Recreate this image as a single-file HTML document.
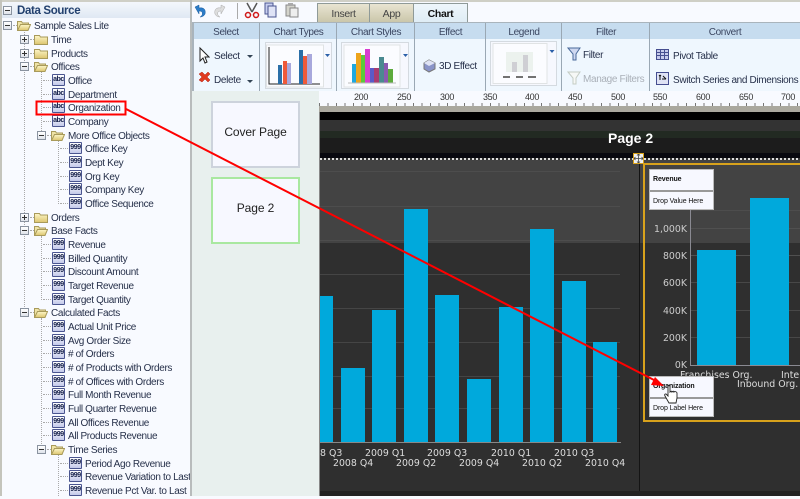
<!DOCTYPE html>
<html><head><meta charset="utf-8"><style>
html,body{margin:0;padding:0}
body{width:800px;height:496px;overflow:hidden;position:relative;background:#f8faff;font:10px "Liberation Sans",sans-serif;color:#26304a;letter-spacing:-.35px}
.a,.a *{box-sizing:border-box}
.a{position:absolute}
.r{position:absolute;height:16px;line-height:14px;white-space:nowrap;left:0;width:190px;overflow:hidden}
.r span{position:absolute;top:2px}
.r i{position:absolute}
.x{width:9px;height:9px;top:3px;border:1px solid #8a93a0;background:linear-gradient(#fff,#dfe3ea);box-sizing:border-box}
.x:before{content:"";position:absolute;left:1px;top:3px;width:5px;height:1px;background:#333}
.p:after{content:"";position:absolute;left:3px;top:1px;width:1px;height:5px;background:#333}
.d{height:0;top:7px;border-top:1px dotted #aaa;width:8px}
.f{position:absolute;top:1px;width:14px;height:12px}
.ic{position:absolute;top:1px;width:13px;height:12px;box-sizing:border-box;border:1px solid #4a5590;background:linear-gradient(#fff,#c3c9ea);font:bold 7px/10px "Liberation Sans",sans-serif;color:#15204a;text-align:center;letter-spacing:-.4px;border-radius:1px}
.l1 .x{left:20px}.l1 .f{left:34px}.l1 span{left:51px}.l1 .d{left:30px;width:4px}
.l2 .d{left:43px}.l2 .ic{left:52px}.l2 span{left:68px}
.l2f .x{left:37px}.l2f .f{left:51px}.l2f span{left:68px}.l2f .d{left:47px;width:4px}
.l3 .d{left:60px}.l3 .ic{left:69px}.l3 span{left:85px}
.v{position:absolute;width:0;border-left:1px dotted #aaa}
.h{position:absolute;top:23px;height:16px;background:#c6dcef;text-align:center;line-height:20px;font-size:10px;color:#3a4560}
.sep{position:absolute;top:23px;height:68px;width:1px;background:#9aa8b4}
.t{position:absolute;white-space:nowrap}
.tab{position:absolute;top:3px;height:19px;text-align:center;line-height:20px;font-size:10.5px;border:1px solid #8f9a98;border-bottom:0;background:linear-gradient(#e8e4d2,#c9c5a8);color:#444}
.rl{position:absolute;top:92px;font-size:9px;line-height:11px;transform:translateX(-50%);color:#333}
.b{position:absolute;background:#00a9dc}
.cl{position:absolute;font:9.4px/12px "DejaVu Sans",sans-serif;color:#ddd;white-space:nowrap;letter-spacing:0}
.drop{position:absolute;left:649px;width:65px;height:41px;box-sizing:border-box;background:#f7f8ff;border:1px solid #bbb;color:#111;font-size:7px;letter-spacing:-.1px}
.drop div{height:20px;line-height:19px;padding-left:3px;box-sizing:border-box}
.drop div+div{border-top:2px solid #999}
.y{position:absolute;left:640px;width:47px;text-align:right;font:9.4px/12px "DejaVu Sans",sans-serif;color:#ccc;letter-spacing:0}
</style></head><body>
<svg width="0" height="0" style="position:absolute"><defs>
<linearGradient id="g" x1="0" y1="0" x2="0" y2="1"><stop offset="0" stop-color="#fdf6c8"/><stop offset="1" stop-color="#dcc56e"/></linearGradient>
<g id="fc"><path d="M.5 2.5h5l1 1.5h7v7.5H.5z" fill="url(#g)" stroke="#a89a5a"/></g>
<g id="fo"><path d="M.5 2.5h4l1 1.5h6v2H4l-3.500 5.500z" fill="#efe3a6" stroke="#a89a5a"/><path d="M3.500 5.500h10l-2.500 6H.5z" fill="url(#g)" stroke="#a89a5a"/></g>
</defs></svg>

<!-- left panel -->
<div class="a" style="left:0;top:0;width:800px;height:2px;background:#cfcfc6"></div>
<div class="a" style="left:0;top:0;width:2px;height:496px;background:#c4c4bc"></div>
<div class="a" style="left:2px;top:2px;width:188px;height:16px;background:linear-gradient(#f4f7fc,#dfe8f3)"></div>
<div class="a x" style="left:3px;top:6px"></div>
<div class="t" style="left:17px;top:3px;font:bold 11.500px/16px 'Liberation Sans',sans-serif;color:#22406e">Data Source</div>

<div class="v" style="left:24px;top:30px;height:283px"></div>
<div class="v" style="left:41px;top:72px;height:59px"></div>
<div class="v" style="left:41px;top:236px;height:64px"></div>
<div class="v" style="left:41px;top:318px;height:128px"></div>
<div class="v" style="left:58px;top:140px;height:64px"></div>
<div class="v" style="left:58px;top:454px;height:42px"></div>

<div class="r" style="top:18px"><i class="x" style="left:3px"></i><i class="d" style="left:13px;width:4px"></i><svg class="f" style="left:17px"><use href="#fo"/></svg><span style="left:34px">Sample Sales Lite</span></div>
<div class="r l1" style="top:32px"><i class="x p"></i><i class="d"></i><svg class="f"><use href="#fc"/></svg><span>Time</span></div>
<div class="r l1" style="top:46px"><i class="x p"></i><i class="d"></i><svg class="f"><use href="#fc"/></svg><span>Products</span></div>
<div class="r l1" style="top:59px"><i class="x"></i><i class="d"></i><svg class="f"><use href="#fo"/></svg><span>Offices</span></div>
<div class="r l2" style="top:73px"><i class="d"></i><b class="ic">abc</b><span>Office</span></div>
<div class="r l2" style="top:87px"><i class="d"></i><b class="ic">abc</b><span>Department</span></div>
<div class="r l2" style="top:100px"><i class="d"></i><b class="ic">abc</b><span>Organization</span></div>
<div class="r l2" style="top:114px"><i class="d"></i><b class="ic">abc</b><span>Company</span></div>
<div class="r l2f" style="top:128px"><i class="x"></i><i class="d"></i><svg class="f"><use href="#fo"/></svg><span>More Office Objects</span></div>
<div class="r l3" style="top:141px"><i class="d"></i><b class="ic">999</b><span>Office Key</span></div>
<div class="r l3" style="top:155px"><i class="d"></i><b class="ic">999</b><span>Dept Key</span></div>
<div class="r l3" style="top:169px"><i class="d"></i><b class="ic">999</b><span>Org Key</span></div>
<div class="r l3" style="top:182px"><i class="d"></i><b class="ic">999</b><span>Company Key</span></div>
<div class="r l3" style="top:196px"><i class="d"></i><b class="ic">999</b><span>Office Sequence</span></div>
<div class="r l1" style="top:210px"><i class="x p"></i><i class="d"></i><svg class="f"><use href="#fc"/></svg><span>Orders</span></div>
<div class="r l1" style="top:223px"><i class="x"></i><i class="d"></i><svg class="f"><use href="#fo"/></svg><span>Base Facts</span></div>
<div class="r l2" style="top:237px"><i class="d"></i><b class="ic">999</b><span>Revenue</span></div>
<div class="r l2" style="top:251px"><i class="d"></i><b class="ic">999</b><span>Billed Quantity</span></div>
<div class="r l2" style="top:264px"><i class="d"></i><b class="ic">999</b><span>Discount Amount</span></div>
<div class="r l2" style="top:278px"><i class="d"></i><b class="ic">999</b><span>Target Revenue</span></div>
<div class="r l2" style="top:292px"><i class="d"></i><b class="ic">999</b><span>Target Quantity</span></div>
<div class="r l1" style="top:305px"><i class="x"></i><i class="d"></i><svg class="f"><use href="#fo"/></svg><span>Calculated Facts</span></div>
<div class="r l2" style="top:319px"><i class="d"></i><b class="ic">999</b><span>Actual Unit Price</span></div>
<div class="r l2" style="top:333px"><i class="d"></i><b class="ic">999</b><span>Avg Order Size</span></div>
<div class="r l2" style="top:346px"><i class="d"></i><b class="ic">999</b><span># of Orders</span></div>
<div class="r l2" style="top:360px"><i class="d"></i><b class="ic">999</b><span># of Products with Orders</span></div>
<div class="r l2" style="top:374px"><i class="d"></i><b class="ic">999</b><span># of Offices with Orders</span></div>
<div class="r l2" style="top:387px"><i class="d"></i><b class="ic">999</b><span>Full Month Revenue</span></div>
<div class="r l2" style="top:401px"><i class="d"></i><b class="ic">999</b><span>Full Quarter Revenue</span></div>
<div class="r l2" style="top:415px"><i class="d"></i><b class="ic">999</b><span>All Offices Revenue</span></div>
<div class="r l2" style="top:428px"><i class="d"></i><b class="ic">999</b><span>All Products Revenue</span></div>
<div class="r l2f" style="top:442px"><i class="x"></i><i class="d"></i><svg class="f"><use href="#fo"/></svg><span>Time Series</span></div>
<div class="r l3" style="top:456px"><i class="d"></i><b class="ic">999</b><span>Period Ago Revenue</span></div>
<div class="r l3" style="top:469px"><i class="d"></i><b class="ic">999</b><span>Revenue Variation to Last</span></div>
<div class="r l3" style="top:483px"><i class="d"></i><b class="ic">999</b><span>Revenue Pct Var. to Last</span></div>

<!-- toolbar -->
<div class="a" style="left:190px;top:0;width:2px;height:496px;background:#b8bcbc"></div>
<div class="a" style="left:192px;top:2px;width:608px;height:21px;background:#f8faff"></div>
<svg class="a" style="left:192px;top:2px" width="125" height="20">
<path d="M3 5l4-2v3c5-1 7 2 6 6-1 2-3 3-5 3 2-1 3-3 2-5-1-1-2-1-3-1v3z" fill="#2b7cc8" stroke="#1a5a9a" stroke-width=".5"/>
<path d="M33 5l-4-2v3c-5-1-7 2-6 6 1 2 3 3 5 3-2-1-3-3-2-5 1-1 2-1 3-1v3z" fill="#ddd" stroke="#aaa" stroke-width=".5"/>
<rect x="45" y="1" width="1" height="16" fill="#aaa"/>
<path d="M55 1l5 9M65 1l-5 9" stroke="#555" stroke-width="1.500"/><circle cx="56" cy="13" r="2.500" fill="none" stroke="#d01818" stroke-width="1.500"/><circle cx="64" cy="13" r="2.500" fill="none" stroke="#d01818" stroke-width="1.500"/>
<rect x="73" y="1" width="8" height="11" fill="#c8cff0" stroke="#4a5590"/><rect x="76" y="4" width="8" height="11" fill="#dfe3f6" stroke="#4a5590"/>
<rect x="94" y="3" width="9" height="11" fill="#d4d4cc" stroke="#888"/><rect x="98" y="6" width="8" height="9" fill="#eee" stroke="#888"/><rect x="96" y="1" width="5" height="3" fill="#aaa"/>
</svg>
<div class="tab" style="left:317px;width:51px">Insert</div>
<div class="tab" style="left:369px;width:43px">App</div>
<div class="tab" style="left:413px;width:53px;background:linear-gradient(#eef6fb,#dcebf4);color:#111;font-weight:bold;height:21px">Chart</div>

<!-- ribbon -->
<div class="a" style="left:192px;top:22px;width:608px;height:1px;background:#a9b4bc"></div>
<div class="a" style="left:192px;top:23px;width:608px;height:68px;background:#eff7fe"></div>
<div class="h" style="left:192px;width:68px">Select</div>
<div class="h" style="left:260px;width:77px">Chart Types</div>
<div class="h" style="left:337px;width:78px">Chart Styles</div>
<div class="h" style="left:415px;width:71px">Effect</div>
<div class="h" style="left:486px;width:76px">Legend</div>
<div class="h" style="left:562px;width:88px">Filter</div>
<div class="h" style="left:650px;width:150px">Convert</div>
<div class="sep" style="left:259px"></div><div class="sep" style="left:336px"></div><div class="sep" style="left:414px"></div><div class="sep" style="left:485px"></div><div class="sep" style="left:561px"></div><div class="sep" style="left:649px"></div>
<div class="a" style="left:192px;top:22px;width:2px;height:70px;background:#a9b4bc"></div>

<svg class="a" style="left:198px;top:46px" width="12" height="40"><path d="M2 2v13l3-3 2 5 2-1-2-5h4z" fill="#fff" stroke="#222"/><path d="M1 28l3-2 3 3 3-3 2 2-3 3 3 3-2 2-3-3-3 3-3-2 3-3z" fill="#e03a20" stroke="#b02010" stroke-width=".5"/></svg>
<div class="t" style="left:214px;top:50px;line-height:14px">Select</div><div class="t" style="left:214px;top:74px;line-height:14px">Delete</div>
<div class="t" style="left:247px;top:55px;width:0;height:0;border:3px solid transparent;border-top-color:#345"></div>
<div class="t" style="left:247px;top:80px;width:0;height:0;border:3px solid transparent;border-top-color:#345"></div>

<!-- chart types -->
<svg class="a" style="left:265px;top:42px" width="70" height="48">
<rect x=".5" y=".5" width="66" height="46" fill="#f6f8fe" stroke="#d4dae0"/><rect x="1.500" y="3" width="57" height="42" fill="#fbfcff" stroke="#e0e3e4"/>
<path d="M4 5v37h51" fill="none" stroke="#222"/>
<rect x="13" y="23" width="4" height="19" fill="#2a6fa8"/><rect x="18" y="19" width="4" height="23" fill="#ef5a3a"/><rect x="22" y="21" width="4" height="21" fill="#a8a8dc"/>
<rect x="34" y="8" width="4" height="34" fill="#2a6fa8"/><rect x="38" y="14" width="4" height="28" fill="#ef5a3a"/><rect x="42" y="12" width="5" height="30" fill="#a8a8dc"/>
<path d="M60 12h5l-2.500 3z" fill="#2a5fa8"/></svg>
<!-- chart styles -->
<svg class="a" style="left:341px;top:42px" width="70" height="48">
<rect x=".5" y=".5" width="67" height="46" fill="#f6f8fe" stroke="#d4dae0"/><rect x="3" y="3" width="56" height="42" fill="#fbfcff" stroke="#e0e3e4"/>
<rect x="11" y="22" width="4" height="19" fill="#1fa8e0"/><rect x="15" y="11" width="5" height="30" fill="#eda41c"/><rect x="20" y="13" width="4" height="28" fill="#5cc83c"/><rect x="24" y="7" width="5" height="34" fill="#d83cd0"/><rect x="29" y="26" width="4" height="15" fill="#5a5ac8"/><rect x="33" y="26" width="5" height="15" fill="#a83c70"/><rect x="38" y="15" width="5" height="26" fill="#4a8a90"/><rect x="43" y="21" width="4" height="20" fill="#8a5ab0"/><rect x="47" y="27" width="5" height="14" fill="#5caa3c"/>
<path d="M7 41h48" stroke="#bbb"/><path d="M62 12h5l-2.500 3z" fill="#2a5fa8"/></svg>
<!-- legend -->
<svg class="a" style="left:490px;top:41px" width="70" height="48">
<rect x=".5" y=".5" width="66" height="44" fill="#f6f8fe" stroke="#d4dae0"/><rect x="3" y="2.500" width="54" height="40" fill="#fbfcff" stroke="#e0e3e4"/>
<rect x="16" y="11" width="27" height="20" fill="#ecf2ee"/><rect x="22" y="21" width="5" height="10" fill="#cfcfd4"/><rect x="33" y="14" width="5" height="17" fill="#cfcfd4"/>
<path d="M13 36h7M26 36h7M38 36h8" stroke="#444" stroke-width="1.500"/><path d="M59.500 9h5l-2.500 3z" fill="#2a5fa8"/></svg>
<svg class="a" style="left:423px;top:59px" width="13" height="14"><path d="M6 1l6 3v6l-6 3-5-3V4z" fill="#8a94c8" stroke="#777"/><path d="M1 4l5 3 6-3-6-3z" fill="#dfe3f4"/></svg>
<div class="t" style="left:439px;top:60px;line-height:14px">3D Effect</div>
<!-- filter -->
<svg class="a" style="left:567px;top:46px" width="14" height="40"><path d="M1 2h12L9 8v6l-3 0V8z" fill="#cfd8f0" stroke="#4a6a9a"/><path d="M1 26h12L9 32v6H6v-6z" fill="#f6f8f6" stroke="#c4ccc4"/></svg>
<div class="t" style="left:583px;top:49px;line-height:14px">Filter</div>
<div class="t" style="left:583px;top:73px;line-height:14px;color:#aab0b8">Manage Filters</div>
<!-- convert -->
<svg class="a" style="left:656px;top:48px" width="14" height="40"><path d="M.5 1.500h12v10H.5z" fill="#c6cbec" stroke="#454e90"/><path d="M.5 4.500h12M.5 7.500h12M4.500 1.500v10M8.500 1.500v10" stroke="#454e90"/>
<rect x=".5" y="24.500" width="12" height="12" fill="#dfe3f5" stroke="#454e90"/><path d="M4 27v5M4 27l-1 1M4 27l1 1M6 31h4M10 31l-1-1M7 28l3 3" stroke="#111" fill="none"/></svg>
<div class="t" style="left:673px;top:50px;line-height:14px">Pivot Table</div>
<div class="t" style="left:673px;top:74px;line-height:14px">Switch Series and Dimensions</div>

<!-- thumbnails -->
<div class="a" style="left:192px;top:91px;width:128px;height:405px;background:#e8f0ee"></div>
<div class="a" style="left:211px;top:101px;width:89px;height:67px;background:#f7f8ff;border:2px solid #cdd3dc;text-align:center;line-height:59px;font-size:12px;letter-spacing:-.1px;color:#222">Cover Page</div>
<div class="a" style="left:211px;top:177px;width:89px;height:67px;background:#f7f8ff;border:2px solid #a9e8a0;text-align:center;line-height:59px;font-size:12px;letter-spacing:-.1px;color:#222">Page 2</div>

<!-- ruler -->
<div class="a" style="left:319px;top:91px;width:481px;height:15px;background:#f8faff"></div>
<div class="a" style="left:319px;top:103px;width:481px;height:3px;background:repeating-linear-gradient(90deg,#777 0,#777 1px,transparent 1px,transparent 8.540px)"></div>
<div class="a" style="left:319px;top:106px;width:481px;height:6px;background:#aaa89e"></div>
<div class="rl" style="left:361px">200</div><div class="rl" style="left:404px">250</div><div class="rl" style="left:447px">300</div><div class="rl" style="left:490px">350</div><div class="rl" style="left:532px">400</div><div class="rl" style="left:575px">450</div><div class="rl" style="left:618px">500</div><div class="rl" style="left:660px">550</div><div class="rl" style="left:703px">600</div><div class="rl" style="left:746px">650</div><div class="rl" style="left:788px">700</div>

<!-- canvas -->
<div class="a" style="left:319px;top:112px;width:1px;height:384px;background:#888"></div>
<div class="a" style="left:320px;top:112px;width:480px;height:8px;background:#000"></div>
<div class="a" style="left:320px;top:120px;width:480px;height:11px;background:#333"></div>
<div class="a" style="left:320px;top:131px;width:480px;height:7px;background:#222a22"></div>
<div class="a" style="left:320px;top:138px;width:480px;height:15px;background:#1c1c1c"></div>
<div class="a" style="left:320px;top:153px;width:480px;height:6px;background:#08080f"></div>
<div class="a" style="left:320px;top:159px;width:480px;height:84px;background:#434343"></div>
<div class="a" style="left:320px;top:243px;width:480px;height:248px;background:#2f2f2f"></div>
<div class="a" style="left:320px;top:491px;width:480px;height:5px;background:#222"></div>
<div class="a" style="left:320px;top:158px;width:480px;height:2px;background:repeating-linear-gradient(90deg,#ddd 0,#ddd 2px,#333 2px,#333 4px)"></div>
<div class="t" style="left:608px;top:130px;font:bold 14px/16px 'Liberation Sans',sans-serif;letter-spacing:0;color:#fff">Page 2</div>
<div class="a" style="left:639px;top:160px;width:1px;height:331px;background:#141414"></div>

<!-- left chart -->
<div class="a" style="left:320px;top:171px;width:300px;height:1px;background:#4d4d4d"></div>
<div class="a" style="left:320px;top:206px;width:300px;height:1px;background:#4d4d4d"></div>
<div class="a" style="left:320px;top:240px;width:300px;height:1px;background:#4d4d4d"></div>
<div class="a" style="left:320px;top:274px;width:300px;height:1px;background:#454545"></div>
<div class="a" style="left:320px;top:308px;width:300px;height:1px;background:#454545"></div>
<div class="a" style="left:320px;top:342px;width:300px;height:1px;background:#454545"></div>
<div class="a" style="left:320px;top:376px;width:300px;height:1px;background:#454545"></div>
<div class="a" style="left:320px;top:408px;width:300px;height:1px;background:#454545"></div>
<div class="b" style="left:320px;top:296px;width:13px;height:146px"></div>
<div class="b" style="left:341px;top:368px;width:24px;height:74px"></div>
<div class="b" style="left:372px;top:310px;width:24px;height:132px"></div>
<div class="b" style="left:404px;top:209px;width:24px;height:233px"></div>
<div class="b" style="left:435px;top:295px;width:24px;height:147px"></div>
<div class="b" style="left:467px;top:379px;width:24px;height:63px"></div>
<div class="b" style="left:499px;top:307px;width:24px;height:135px"></div>
<div class="b" style="left:530px;top:229px;width:24px;height:213px"></div>
<div class="b" style="left:562px;top:281px;width:24px;height:161px"></div>
<div class="b" style="left:593px;top:342px;width:24px;height:100px"></div>
<div class="a" style="left:320px;top:442px;width:301px;height:1px;background:#888"></div>
<div class="a" style="left:320px;top:447px;width:320px;height:30px;overflow:hidden">
<div class="cl" style="left:0;top:1px">8 Q3</div>
<div class="cl" style="left:13px;top:11px">2008 Q4</div>
<div class="cl" style="left:45px;top:1px">2009 Q1</div>
<div class="cl" style="left:76px;top:11px">2009 Q2</div>
<div class="cl" style="left:107px;top:1px">2009 Q3</div>
<div class="cl" style="left:139px;top:11px">2009 Q4</div>
<div class="cl" style="left:171px;top:1px">2010 Q1</div>
<div class="cl" style="left:202px;top:11px">2010 Q2</div>
<div class="cl" style="left:234px;top:1px">2010 Q3</div>
<div class="cl" style="left:265px;top:11px">2010 Q4</div>
</div>

<!-- right chart -->
<div class="a" style="left:643px;top:163px;width:158px;height:259px;border:2px solid #d8a21c;border-right:0"></div>
<div class="a" style="left:633px;top:153px;width:11px;height:11px;background:#eef0f2;border:1px solid #d8a21c"></div>
<svg class="a" style="left:634px;top:154px" width="9" height="9"><path d="M4.500 0v9M0 4.500h9M3 1.500l1.500-1.500 1.500 1.500M3 7.500l1.500 1.500 1.500-1.500M1.500 3L0 4.500 1.500 6M7.500 3L9 4.500 7.500 6" stroke="#444" stroke-width=".8" fill="none"/></svg>
<div class="a" style="left:690px;top:210px;width:110px;height:1px;background:#4d4d4d"></div>
<div class="a" style="left:690px;top:228px;width:110px;height:1px;background:#505050"></div>
<div class="a" style="left:690px;top:255px;width:110px;height:1px;background:#505050"></div>
<div class="a" style="left:690px;top:282px;width:110px;height:1px;background:#484848"></div>
<div class="a" style="left:690px;top:310px;width:110px;height:1px;background:#484848"></div>
<div class="a" style="left:690px;top:337px;width:110px;height:1px;background:#484848"></div>
<div class="a" style="left:690px;top:210px;width:1px;height:155px;background:#8a8a92"></div>
<div class="a" style="left:690px;top:365px;width:110px;height:1px;background:#8a8a92"></div>
<div class="b" style="left:697px;top:250px;width:39px;height:115px"></div>
<div class="b" style="left:750px;top:198px;width:39px;height:167px"></div>
<div class="y" style="top:224px">1,000K</div><div class="y" style="top:251px">800K</div><div class="y" style="top:278px">600K</div><div class="y" style="top:306px">400K</div><div class="y" style="top:333px">200K</div><div class="y" style="top:360px">0K</div>
<div class="cl" style="left:680px;top:370px">Franchises Org.</div>
<div class="cl" style="left:781px;top:370px">Inte</div>
<div class="cl" style="left:737px;top:379px">Inbound Org.</div>
<div class="drop" style="top:169px"><div style="font-weight:bold">Revenue</div><div>Drop Value Here</div></div>
<div class="drop" style="top:376px"><div style="font-weight:bold">Organization</div><div>Drop Label Here</div></div>

<!-- annotation -->
<svg class="a" style="left:0;top:0" width="800" height="496">
<rect x="36.500" y="101.500" width="89" height="13" fill="none" stroke="#f00" stroke-width="2"/>
<path d="M126 109L654 380" stroke="#f00" stroke-width="2"/>
<path d="M664 386l-13-1 4-8z" fill="#f00"/>
<path transform="translate(2 0)" d="M667 403l-4-7c-1-2 1-3 2-1l1 1v-9c0-2 2-2 2 0v5c1-1 2-1 2 0 1-1 2-1 2 0 1-1 3 0 3 1v5l-1 5z" fill="#fff" stroke="#222" stroke-width=".9"/>
</svg>
</body></html>
